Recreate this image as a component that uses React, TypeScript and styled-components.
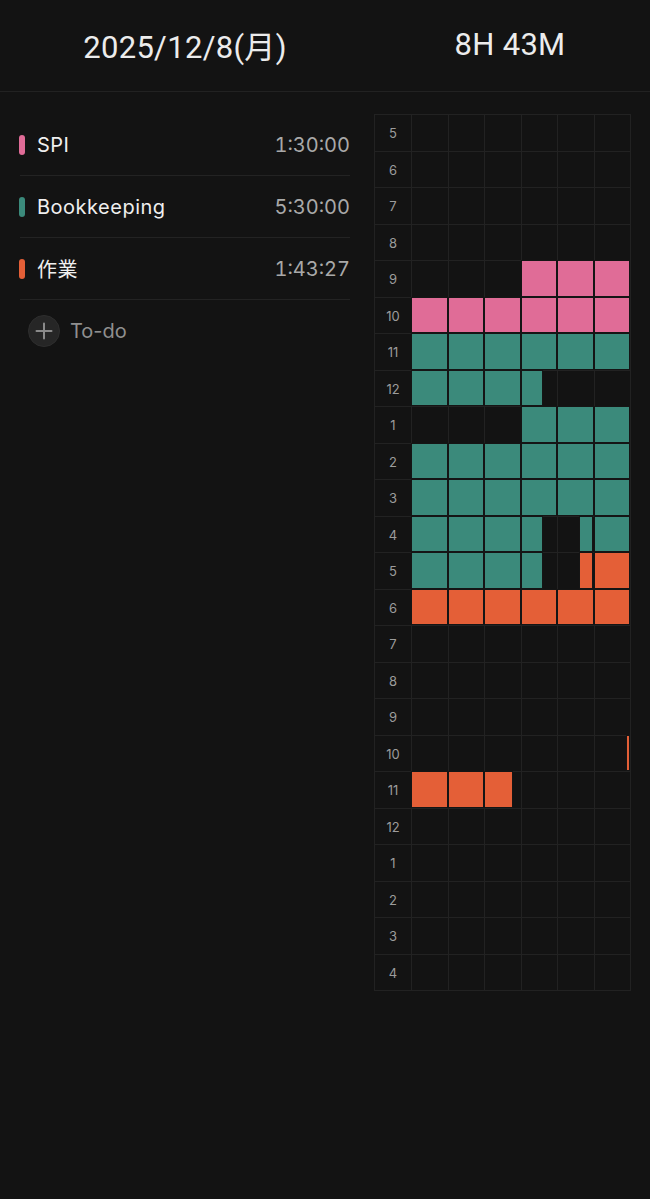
import React from "react";
import styled, { createGlobalStyle } from "styled-components";

const GlobalStyle = createGlobalStyle`
  html, body { margin: 0; padding: 0; background: #131313; }
  body { font-family: Inter, "Noto Sans CJK JP", sans-serif; color: #ececec; }
  * { box-sizing: border-box; }
`;

const PINK = "#e06c97";
const TEAL = "#3b8a7b";
const ORANGE = "#e45f37";

const Page = styled.div`
  width: 650px;
  min-height: 1199px;
  background: #131313;
`;

const Header = styled.header`
  display: grid;
  grid-template-columns: 370px 1fr;
  height: 92px;
  border-bottom: 1px solid #222222;
  align-items: center;
`;

const HeaderText = styled.div`
  font-family: Roboto, "Noto Sans CJK JP", sans-serif;
  font-size: 31px;
  font-weight: 400;
  color: #ececec;
  text-align: center;
  letter-spacing: 0.3px;
  padding-bottom: 2px;
`;

const Body = styled.main`
  display: grid;
  grid-template-columns: 370px 1fr;
  padding-top: 22px;
`;

const List = styled.div`
  display: flex;
  flex-direction: column;
  padding: 0 20px 0 19px;
`;

const TaskRow = styled.div`
  display: flex;
  align-items: center;
  height: 62px;
  border-bottom: 1px solid #232323;
  margin-left: 1px;
`;

const ColorBar = styled.span<{ $color: string }>`
  width: 6px;
  height: 20px;
  border-radius: 3px;
  background: ${(p) => p.$color};
  margin-left: -1px;
  margin-right: 12px;
  flex-shrink: 0;
`;

const TaskName = styled.span`
  flex: 1;
  font-size: 20px;
  letter-spacing: 0.5px;
  color: #efefef;
  font-family: Inter, "Noto Sans CJK JP", sans-serif;
`;

const TaskTime = styled.span`
  font-size: 20px;
  color: #a9a9a9;
  font-variant-numeric: tabular-nums;
`;

const AddRow = styled.div`
  display: flex;
  align-items: center;
  height: 62px;
  padding-left: 9px;
  gap: 10px;
`;

const AddCircle = styled.span`
  width: 32px;
  height: 32px;
  border-radius: 50%;
  background: #262626;
  border: 1px solid #2e2e2e;
  display: flex;
  align-items: center;
  justify-content: center;
`;

const AddLabel = styled.span`
  font-size: 20px;
  color: #8f8f8f;
`;

const GridWrap = styled.div`
  padding-left: 4px;
`;

const TimeGrid = styled.div`
  width: 257px;
  display: grid;
  grid-template-columns: 37px repeat(6, 1fr);
  grid-template-rows: repeat(24, 36.5px);
  border-top: 1px solid #222222;
  border-left: 1px solid #222222;
`;

const HourLabel = styled.div`
  position: relative;
  border-right: 1px solid #222222;
  border-bottom: 1px solid #222222;
  display: flex;
  align-items: center;
  justify-content: center;
  font-size: 13px;
  color: #9c9c9c;
  padding-top: 1px;
`;

const Cell = styled.div`
  position: relative;
  border-right: 1px solid #222222;
  border-bottom: 1px solid #222222;
`;

const Fill = styled.div<{ $color: string }>`
  position: absolute;
  top: -1px;
  bottom: 0;
  background: ${(p) => p.$color};
  border: 1px solid #151515;
`;

type Seg = { start: number; end: number; color: string };

// minutes from 5:00
const m = (h: number, min: number) => (h - 5) * 60 + min;

const segments: Seg[] = [
  { start: m(9, 30), end: m(11, 0), color: PINK },
  { start: m(11, 0), end: m(12, 36), color: TEAL },
  { start: m(13, 30), end: m(16, 36), color: TEAL },
  { start: m(16, 46), end: m(17, 36), color: TEAL },
  { start: m(17, 46), end: m(19, 0), color: ORANGE },
  { start: m(22, 59), end: m(23, 0), color: ORANGE },
  { start: m(23, 0), end: m(23, 28), color: ORANGE },
];

const hours = Array.from({ length: 24 }, (_, i) => {
  const h = (i + 5) % 12;
  return h === 0 ? 12 : h;
});

const tasks = [
  { name: "SPI", time: "1:30:00", color: PINK },
  { name: "Bookkeeping", time: "5:30:00", color: TEAL },
  { name: "作業", time: "1:43:27", color: ORANGE },
];

function cellFills(row: number, col: number) {
  const cs = row * 60 + col * 10;
  const ce = cs + 10;
  const out: { l: number; w: number; color: string; key: number }[] = [];
  segments.forEach((s, i) => {
    const a = Math.max(cs, s.start);
    const b = Math.min(ce, s.end);
    if (b > a) {
      out.push({ l: ((a - cs) / 10) * 100, w: ((b - a) / 10) * 100, color: s.color, key: i });
    }
  });
  return out;
}

function PlusIcon() {
  return (
    <svg width="20" height="20" viewBox="0 0 20 20">
      <path d="M10 2.5v15M2.5 10h15" stroke="#8a8a8a" strokeWidth="2" strokeLinecap="round" />
    </svg>
  );
}

export default function App() {
  return (
    <Page>
      <GlobalStyle />
      <Header>
        <HeaderText>2025/12/8(月)</HeaderText>
        <HeaderText>8H 43M</HeaderText>
      </Header>
      <Body>
        <List>
          {tasks.map((t) => (
            <TaskRow key={t.name}>
              <ColorBar $color={t.color} />
              <TaskName>{t.name}</TaskName>
              <TaskTime>{t.time}</TaskTime>
            </TaskRow>
          ))}
          <AddRow>
            <AddCircle>
              <PlusIcon />
            </AddCircle>
            <AddLabel>To-do</AddLabel>
          </AddRow>
        </List>
        <GridWrap>
          <TimeGrid>
            {hours.map((h, r) => (
              <React.Fragment key={r}>
                <HourLabel>{h}</HourLabel>
                {Array.from({ length: 6 }, (_, c) => (
                  <Cell key={c}>
                    {cellFills(r, c).map((f) => (
                      <Fill
                        key={f.key}
                        $color={f.color}
                        style={{
                          left: f.l === 0 ? "-1px" : `${f.l}%`,
                          width: f.l === 0 ? `calc(${f.w}% + 1px)` : `${f.w}%`,
                        }}
                      />
                    ))}
                  </Cell>
                ))}
              </React.Fragment>
            ))}
          </TimeGrid>
        </GridWrap>
      </Body>
    </Page>
  );
}
